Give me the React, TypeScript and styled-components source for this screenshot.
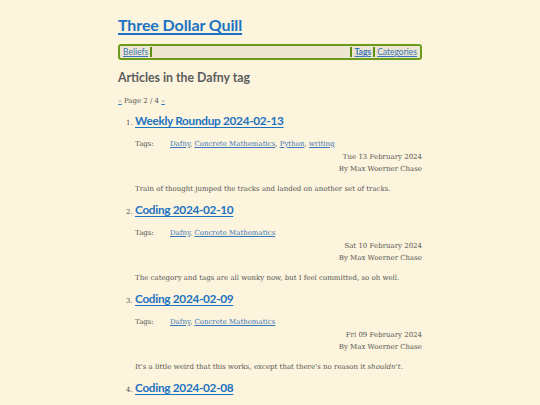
import React from "react";
import styled, { createGlobalStyle } from "styled-components";

const Global = createGlobalStyle`
  html, body { margin: 0; padding: 0; background: #fcf4dc; }
  body { font-family: "DejaVu Serif", serif; color: #555; }
`;

const Page = styled.div`
  width: 304px;
  margin: 0 auto;
  padding-top: 14px;
`;

const SiteTitle = styled.a`
  display: block;
  font-family: Lato, "Open Sans", sans-serif;
  font-weight: 700;
  font-size: 16px;
  letter-spacing: -0.1px;
  line-height: 22px;
  color: #1d72c2;
  text-decoration: underline;
  text-decoration-thickness: 1.5px;
  text-underline-offset: 2px;
`;

const Nav = styled.nav`
  margin-top: 8px;
  display: flex;
  align-items: center;
  height: 12px;
  border: 2px solid #6d9b1c;
  border-radius: 3px;
  background: #ece5d1;
  padding: 0 2px;
  font-family: Lato, "Open Sans", sans-serif;
  font-size: 8.5px;
`;

const NavLink = styled.a<{ $bold?: boolean }>`
  color: #3a76b8;
  font-weight: ${(p) => (p.$bold ? 700 : 400)};
  text-decoration: underline;
  padding: 0 1px;
`;

const Sep = styled.span`
  width: 2px;
  height: 10px;
  background: #5f8f12;
  margin: 0 1px;
`;

const Spacer = styled.span`
  flex: 1;
`;

const Heading = styled.h1`
  margin: 9px 0 0;
  font-family: Lato, "Open Sans", sans-serif;
  font-size: 12.3px;
  line-height: 18px;
  font-weight: 700;
  color: #5a5d5d;
`;

const Pager = styled.div`
  margin-top: 8px;
  font-size: 7px;
  color: #555;
  line-height: 12px;
  a { color: #3a76b8; text-decoration: underline; font-size: 6px; }
`;

const List = styled.ol`
  margin: 5px 0 0;
  padding-left: 17px;
  font-size: 7px;
`;

const Item = styled.li`
  height: 89px;
  &::marker { font-size: 7px; color: #555; }
`;

const ItemTitle = styled.a`
  font-family: Lato, "Open Sans", sans-serif;
  font-weight: 700;
  font-size: 11.8px;
  letter-spacing: -0.3px;
  line-height: 18px;
  color: #1d72c2;
  text-decoration: underline;
  text-underline-offset: 2px;
`;

const TagRow = styled.div`
  display: flex;
  margin: 8px 0 1px;
  font-size: 7px;
  line-height: 12px;
  color: #555;
`;

const TagLabel = styled.span`
  width: 35px;
`;

const TagLink = styled.a`
  color: #3a76b8;
  text-decoration: underline;
`;

const Meta = styled.div`
  text-align: right;
  font-size: 7px;
  line-height: 12px;
  color: #555;
`;

const Summary = styled.p`
  margin: 8px 0 0;
  font-size: 7px;
  line-height: 12px;
  color: #555;
`;

const posts = [
  {
    title: "Weekly Roundup 2024-02-13",
    tags: ["Dafny", "Concrete Mathematics", "Python", "writing"],
    date: "Tue 13 February 2024",
    summary: <>Train of thought jumped the tracks and landed on another set of tracks.</>,
  },
  {
    title: "Coding 2024-02-10",
    tags: ["Dafny", "Concrete Mathematics"],
    date: "Sat 10 February 2024",
    summary: <>The category and tags are all wonky now, but I feel committed, so oh well.</>,
  },
  {
    title: "Coding 2024-02-09",
    tags: ["Dafny", "Concrete Mathematics"],
    date: "Fri 09 February 2024",
    summary: (
      <>
        It’s a little weird that this works, except that there’s no reason it <em>shouldn’t</em>.
      </>
    ),
  },
  {
    title: "Coding 2024-02-08",
    tags: ["Dafny", "Concrete Mathematics"],
    date: "Thu 08 February 2024",
    summary: <>More Dafny.</>,
  },
];

export default function App() {
  return (
    <>
      <Global />
      <Page>
        <SiteTitle href="#">Three Dollar Quill</SiteTitle>
        <Nav>
          <NavLink href="#">Beliefs</NavLink>
          <Sep />
          <Spacer />
          <Sep />
          <NavLink href="#" $bold>Tags</NavLink>
          <Sep />
          <NavLink href="#">Categories</NavLink>
        </Nav>
        <Heading>Articles in the Dafny tag</Heading>
        <Pager>
          <a href="#">«</a> Page 2 / 4 <a href="#">»</a>
        </Pager>
        <List>
          {posts.map((p) => (
            <Item key={p.title}>
              <ItemTitle href="#">{p.title}</ItemTitle>
              <TagRow>
                <TagLabel>Tags:</TagLabel>
                <span>
                  {p.tags.map((t, i) => (
                    <React.Fragment key={t}>
                      {i > 0 && ", "}
                      <TagLink href="#">{t}</TagLink>
                    </React.Fragment>
                  ))}
                </span>
              </TagRow>
              <Meta>{p.date}</Meta>
              <Meta>By Max Woerner Chase</Meta>
              <Summary>{p.summary}</Summary>
            </Item>
          ))}
        </List>
      </Page>
    </>
  );
}
